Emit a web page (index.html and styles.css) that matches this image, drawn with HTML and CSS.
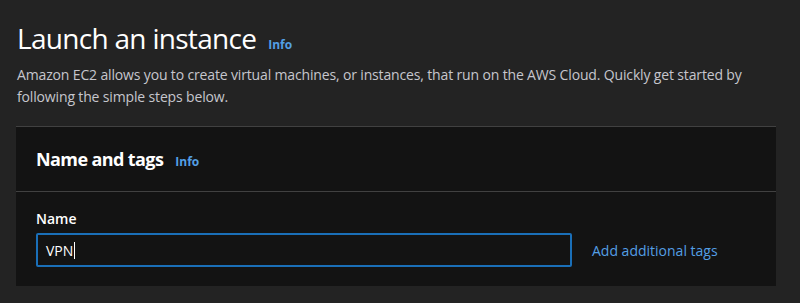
FILE: index.html
```html
<!DOCTYPE html>
<html lang="en">
<head>
<meta charset="utf-8">
<title>Launch an instance</title>
<link rel="stylesheet" href="styles.css">
</head>
<body>
<main class="page">
  <header class="page-header">
    <h1 class="title"><span class="title-text">Launch an instance</span> <a class="info" href="#">Info</a></h1>
    <p class="desc">Amazon EC2 allows you to create virtual machines, or instances, that run on the AWS Cloud. Quickly get started by following the simple steps below.</p>
  </header>
  <section class="card">
    <div class="card-header">
      <h2 class="card-title"><span class="card-title-text">Name and tags</span> <a class="info" href="#">Info</a></h2>
    </div>
    <div class="card-body">
      <label class="label" for="name">Name</label>
      <div class="row">
        <div class="input"><span class="value">VPN</span><span class="caret"></span></div>
        <a class="link" href="#">Add additional tags</a>
      </div>
    </div>
  </section>
</main>
</body>
</html>
```
FILE: styles.css
```css
html, body {
  margin: 0;
  padding: 0;
  background: #232323;
  font-family: "Open Sans", "Noto Sans", sans-serif;
  color: #e9ebed;
}
.page {
  padding: 20px 24px 0 16px;
}
.page-header {
  padding: 0 0 0 1px;
}
.title {
  margin: 0;
  font-size: 28px;
  line-height: 36px;
  font-weight: 400;
  color: #ffffff;
  display: flex;
  align-items: baseline;
  gap: 12px;
}
.title-text {
  letter-spacing: -0.7px;
}
.info {
  font-size: 12px;
  font-weight: 700;
  color: #539fe5;
  text-decoration: none;
}
.desc {
  margin: 1px 0 0;
  font-size: 14px;
  line-height: 22px;
  letter-spacing: -0.15px;
  color: #c6c6cd;
}
.card {
  margin-top: 18px;
  background: #131313;
  border-top: 1px solid #414141;
}
.card-header {
  height: 64px;
  display: flex;
  align-items: center;
  padding: 0 20px;
  border-bottom: 1px solid #414141;
}
.card-title {
  margin: 0;
  font-size: 18px;
  font-weight: 700;
  color: #ffffff;
  display: flex;
  align-items: baseline;
  gap: 12px;
}
.card-title-text {
  letter-spacing: -0.6px;
}
.card-body {
  padding: 16px 20px 19px;
}
.label {
  display: block;
  font-size: 14px;
  line-height: 22px;
  font-weight: 600;
  color: #ffffff;
  margin-bottom: 3px;
}
.row {
  display: flex;
  align-items: center;
  gap: 20px;
}
.input {
  box-sizing: border-box;
  width: 536px;
  height: 34px;
  border: 2px solid #1a6fb8;
  border-radius: 2px;
  display: flex;
  align-items: center;
  padding: 0 8px;
  font-size: 14px;
  color: #ffffff;
}
.caret {
  display: inline-block;
  width: 1px;
  height: 17px;
  background: #ffffff;
  margin-left: 1px;
}
.link {
  font-size: 14px;
  color: #539fe5;
  text-decoration: none;
}
```
